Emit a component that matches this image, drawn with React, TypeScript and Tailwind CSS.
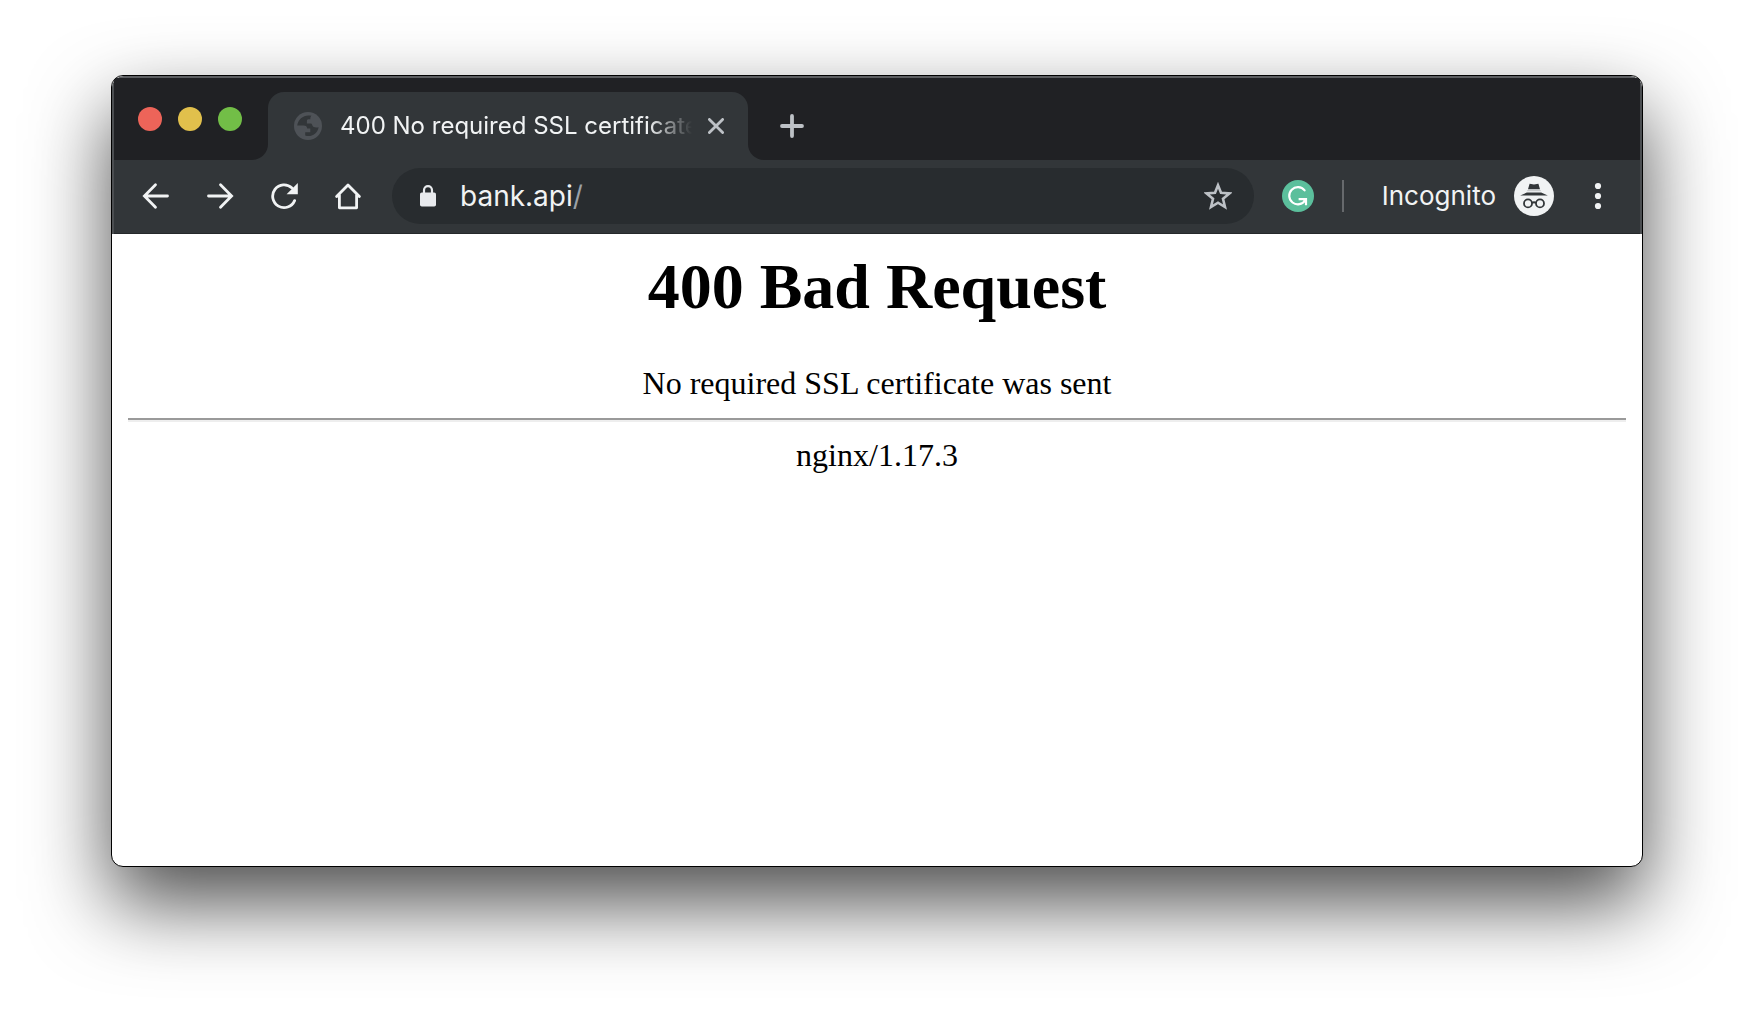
import React, { useState } from "react";

const TrafficLights = () => (
  <div className="flex gap-4">
    <button aria-label="Close window" className="size-6 rounded-full bg-[#ed6459]" />
    <button aria-label="Minimize window" className="size-6 rounded-full bg-[#e1c04c]" />
    <button aria-label="Zoom window" className="size-6 rounded-full bg-[#72be47]" />
  </div>
);

const GlobeIcon = () => (
  <svg viewBox="0 0 28 28" className="size-7 shrink-0" aria-hidden="true">
    <circle cx="14" cy="14" r="14" fill="#4e5257" />
    <path
      d="M17.5 3.8C10.5 2 4.2 6.5 3.2 13.5H9.5C12 13.5 13 14.5 13.2 16.5H16.3V20.3H11.2V23.6C17 25.5 23.5 22 24.6 15.2C23 15.8 20.8 15.8 19.3 14.8C18.2 14 18.3 12.2 17.3 11.6H12.9V8.7C12.9 7.5 14 7.2 15.2 7.2H16.3C16.3 5.6 16.7 4.5 17.5 3.8Z"
      fill="#323639"
    />
  </svg>
);

const NavButton = ({ label, children }: { label: string; children: React.ReactNode }) => (
  <button aria-label={label} className="size-7 shrink-0">
    <svg
      viewBox="0 0 28 28"
      className="size-7"
      fill="none"
      stroke="#f1f3f4"
      strokeWidth="2.8"
      strokeLinecap="round"
    >
      {children}
    </svg>
  </button>
);

const TabStrip = () => (
  <div className="flex h-[82px] bg-[#323639]">
    <div className="flex w-[154px] shrink-0 items-center rounded-br-2xl bg-[#202124] pl-6">
      <TrafficLights />
    </div>
    <div className="w-[480px] bg-[#202124] pt-[14px]">
      <div className="flex h-full items-center rounded-t-2xl bg-[#323639] pl-[26px] pr-6">
        <GlobeIcon />
        <span className="ml-[18px] min-w-0 flex-1 overflow-hidden whitespace-nowrap text-[24px] leading-8 text-[#f1f3f4] [mask-image:linear-gradient(to_right,black_calc(100%-44px),transparent)]">
          400 No required SSL certificate
        </span>
        <button aria-label="Close tab" className="ml-4 size-4 shrink-0">
          <svg viewBox="0 0 16 16" className="size-4" stroke="#bdc1c6" strokeWidth="2.8" strokeLinecap="round">
            <path d="M1.4 1.4L14.6 14.6M14.6 1.4L1.4 14.6" />
          </svg>
        </button>
      </div>
    </div>
    <div className="flex flex-1 items-center rounded-bl-2xl bg-[#202124] pl-8 pt-[14px]">
      <button aria-label="New tab" className="size-6">
        <svg viewBox="0 0 24 24" className="size-6" stroke="#bdc1c6" strokeWidth="3.8" strokeLinecap="round">
          <path d="M12 2V22M2 12H22" />
        </svg>
      </button>
    </div>
  </div>
);

const AddressBar = () => {
  const [host, setHost] = useState("bank.api");

  return (
    <div className="ml-[30px] flex h-14 min-w-0 flex-1 items-center rounded-full bg-[#282c2f] pl-7 pr-[22px]">
      <svg viewBox="0 0 16 22" className="h-[22px] w-4 shrink-0" aria-hidden="true">
        <rect y="7.5" width="16" height="14" rx="1.8" fill="#e8eaed" />
        <path d="M4 8.5V5.2a4 4 0 0 1 8 0V8.5" fill="none" stroke="#e8eaed" strokeWidth="2.2" />
      </svg>
      <input
        aria-label="Address"
        value={host}
        onChange={(e) => setHost(e.target.value)}
        className="field-sizing-content ml-6 bg-transparent text-[28px] leading-9 text-[#f1f3f4] outline-none"
      />
      <span className="flex-1 text-[28px] leading-9 text-[#9aa0a6]">/</span>
      <button aria-label="Bookmark this page" className="size-7 shrink-0">
        <svg viewBox="0 0 28 28" className="size-7" fill="none" stroke="#bdc1c6" strokeWidth="2.6">
          <path d="M14 3.2L17 10.7L25.4 11.4L19 16.8L21 25L14 20.7L7 25L9 16.8L2.6 11.4L11 10.7Z" />
        </svg>
      </button>
    </div>
  );
};

const Toolbar = () => (
  <div className="flex items-center border-b border-[#25282b] bg-[#323639] pb-[9px] pl-7 pr-7 pt-2">
    <nav className="flex gap-9">
      <NavButton label="Back">
        <path d="M25.5 14H3M13.5 2.8L2.4 14L13.5 25.2" />
      </NavButton>
      <NavButton label="Forward">
        <path d="M2.5 14H25M14.5 2.8L25.6 14L14.5 25.2" />
      </NavButton>
      <NavButton label="Reload">
        <path d="M24.6 18.6A11.4 11.4 0 1 1 22 6" />
        <path d="M27.8 1V12.2H16.6Z" fill="#f1f3f4" stroke="none" />
      </NavButton>
      <NavButton label="Home">
        <path d="M2.6 14.6L14 3L25.4 14.6M5.4 13V25.8H22.6V13" strokeLinejoin="round" />
      </NavButton>
    </nav>
    <AddressBar />
    <button aria-label="Grammarly" className="ml-7 size-8 shrink-0">
      <svg viewBox="0 0 32 32" className="size-8" fill="none" stroke="#fff" strokeWidth="2.2">
        <circle cx="16" cy="16" r="16" fill="#5bbf9c" stroke="none" />
        <path d="M22.6 10.4A8.6 8.6 0 1 0 23.2 20.2" strokeLinecap="round" />
        <path d="M16.6 19.2H24V25.2" />
        <path d="M20.4 19.4H24V23Z" fill="#fff" stroke="none" />
      </svg>
    </button>
    <div className="ml-7 h-8 w-[2px] bg-[#66696c]" />
    <button className="ml-[38px] flex items-center gap-[18px]">
      <span className="text-[26px] leading-9 text-[#f1f3f4]">Incognito</span>
      <svg viewBox="0 0 40 40" className="size-10" fill="none" aria-hidden="true">
        <circle cx="20" cy="20" r="20" fill="#f1f3f4" />
        <path d="M15.6 7.8L20 8.6L24.4 7.8L26 13.2H14Z" fill="#323639" />
        <path d="M12.8 16.6H27.2L33.8 19.6H6.2Z" fill="#323639" />
        <path d="M13.2 14.6H26.8" stroke="#c9cbcd" strokeWidth="1.4" />
        <g stroke="#323639" strokeWidth="1.8">
          <circle cx="14" cy="27.4" r="4" />
          <circle cx="26" cy="27.4" r="4" />
          <path d="M18 27Q20 25.4 22 27" />
        </g>
      </svg>
    </button>
    <button aria-label="Menu" className="ml-[30px] size-7 shrink-0">
      <svg viewBox="0 0 28 28" className="size-7" fill="#f1f3f4">
        <circle cx="14" cy="4" r="3.1" />
        <circle cx="14" cy="14" r="3.1" />
        <circle cx="14" cy="24" r="3.1" />
      </svg>
    </button>
  </div>
);

const ErrorPage = () => (
  <main className="px-4 pt-4 text-center font-['Liberation_Serif',serif] text-[32px] leading-9 text-black">
    <h1 className="text-[64px] font-bold leading-[74px]">400 Bad Request</h1>
    <p className="mt-[41px]">No required SSL certificate was sent</p>
    <hr className="mb-[15px] mt-[17px] h-1 border-b-2 border-t-2 border-b-[#eeeeee] border-t-[#9a9a9a]" />
    <p>nginx/1.17.3</p>
  </main>
);

export default function App() {
  return (
    <div className="flex min-h-screen flex-col overflow-hidden bg-white px-[111px] pb-[147px] pt-[75px] font-[Inter,sans-serif]">
      <div className="flex-1 overflow-hidden rounded-xl border border-black bg-white shadow-[0_36px_80px_rgba(0,0,0,0.7)]">
        <header className="rounded-t-xl border-x-2 border-t-2 border-x-[#4b4e51] border-t-[#5c5e61] bg-[#202124]">
          <TabStrip />
          <Toolbar />
        </header>
        <ErrorPage />
      </div>
    </div>
  );
}
